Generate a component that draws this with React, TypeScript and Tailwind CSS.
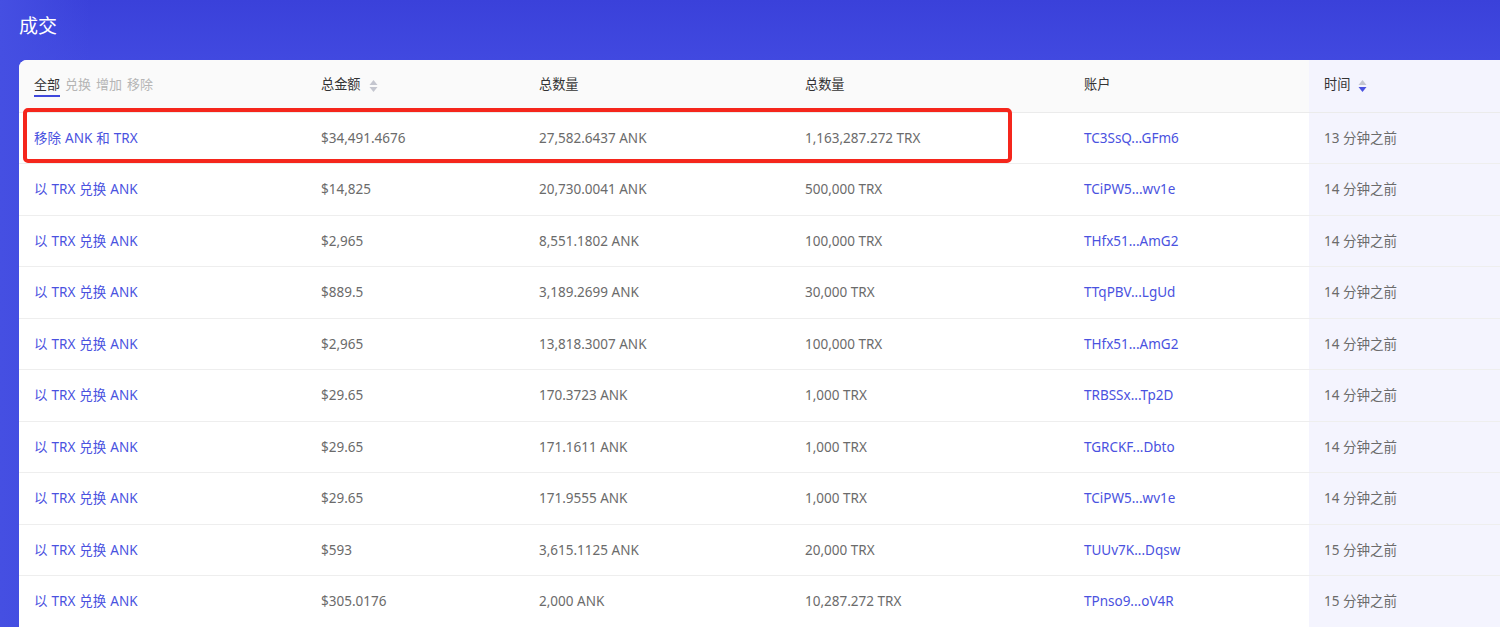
const rows = [
  ["移除 ANK 和 TRX", "$34,491.4676", "27,582.6437 ANK", "1,163,287.272 TRX", "TC3SsQ...GFm6", "13 分钟之前"],
  ["以 TRX 兑换 ANK", "$14,825", "20,730.0041 ANK", "500,000 TRX", "TCiPW5...wv1e", "14 分钟之前"],
  ["以 TRX 兑换 ANK", "$2,965", "8,551.1802 ANK", "100,000 TRX", "THfx51...AmG2", "14 分钟之前"],
  ["以 TRX 兑换 ANK", "$889.5", "3,189.2699 ANK", "30,000 TRX", "TTqPBV...LgUd", "14 分钟之前"],
  ["以 TRX 兑换 ANK", "$2,965", "13,818.3007 ANK", "100,000 TRX", "THfx51...AmG2", "14 分钟之前"],
  ["以 TRX 兑换 ANK", "$29.65", "170.3723 ANK", "1,000 TRX", "TRBSSx...Tp2D", "14 分钟之前"],
  ["以 TRX 兑换 ANK", "$29.65", "171.1611 ANK", "1,000 TRX", "TGRCKF...Dbto", "14 分钟之前"],
  ["以 TRX 兑换 ANK", "$29.65", "171.9555 ANK", "1,000 TRX", "TCiPW5...wv1e", "14 分钟之前"],
  ["以 TRX 兑换 ANK", "$593", "3,615.1125 ANK", "20,000 TRX", "TUUv7K...Dqsw", "15 分钟之前"],
  ["以 TRX 兑换 ANK", "$305.0176", "2,000 ANK", "10,287.272 TRX", "TPnso9...oV4R", "15 分钟之前"],
];

function SortIcon({ active }: { active?: boolean }) {
  return (
    <svg width="9" height="14" viewBox="0 0 9 14" className="ml-2 mt-0.5 shrink-0">
      <path d="M4.5 1 L8.5 6 L0.5 6 Z" fill="#c4c6cf" />
      <path d="M4.5 13 L8.5 8 L0.5 8 Z" fill={active ? "#4a52e0" : "#c4c6cf"} />
    </svg>
  );
}

const gridCols = "grid grid-cols-[302px_218px_266px_279px_225px_1fr]";

export default function App() {
  return (
    <div className="h-[627px] overflow-hidden bg-[linear-gradient(90deg,#454fe2,transparent_90px),linear-gradient(180deg,#3a41da_0,#4149e0_60px)] font-['Noto_Sans','Noto_Sans_CJK_SC',sans-serif]">
      <h2 className="h-[60px] pl-[19px] pt-[13px] text-[19px] leading-[27px] text-white">成交</h2>

      <div className="relative ml-[19px] rounded-tl-lg bg-white text-[13.5px]">
        <div className={`${gridCols} h-[52.5px] border-b border-[#ebebeb] bg-[#fafafa] rounded-tl-lg text-[13.2px] text-[#333]`}>
          <div className="flex items-start gap-[5px] pl-[15px] pt-[15px] text-[13px] text-[#b5b5b5]">
            <span className="h-[22px] border-b-2 border-[#3f48dc] leading-[19px] text-[#333]">全部</span>
            <span className="leading-[19px]">兑换</span>
            <span className="leading-[19px]">增加</span>
            <span className="leading-[19px]">移除</span>
          </div>
          <div className="flex items-center pb-[2px]">总金额<SortIcon /></div>
          <div className="flex items-center pb-[2px]">总数量</div>
          <div className="flex items-center pb-[2px]">总数量</div>
          <div className="flex items-center pb-[2px]">账户</div>
          <div className="flex items-center bg-[#f4f4fe] pb-[2px] pl-[15px]">时间<SortIcon active /></div>
        </div>

        {rows.map((row, i) => (
          <div key={i} className={`${gridCols} h-[51.5px] text-[#6b6b6b]`}>
            <div className="flex items-center border-b border-[#eeeeee] pl-[15px] text-[#4a52e0] [word-spacing:0.5px]">{row[0]}</div>
            <div className="flex items-center border-b border-[#eeeeee]">{row[1]}</div>
            <div className="flex items-center border-b border-[#eeeeee]">{row[2]}</div>
            <div className="flex items-center border-b border-[#eeeeee]">{row[3]}</div>
            <div className="flex items-center border-b border-[#eeeeee] text-[#4a52e0]">{row[4]}</div>
            <div className="flex items-center border-b border-[#eeeeee] bg-[#f4f4fe] pl-[15px]">{row[5]}</div>
          </div>
        ))}

        <div className="absolute left-[4px] top-[48px] h-[55px] w-[989px] rounded-[5px] border-4 border-[#f5261c]" />
      </div>
    </div>
  );
}
